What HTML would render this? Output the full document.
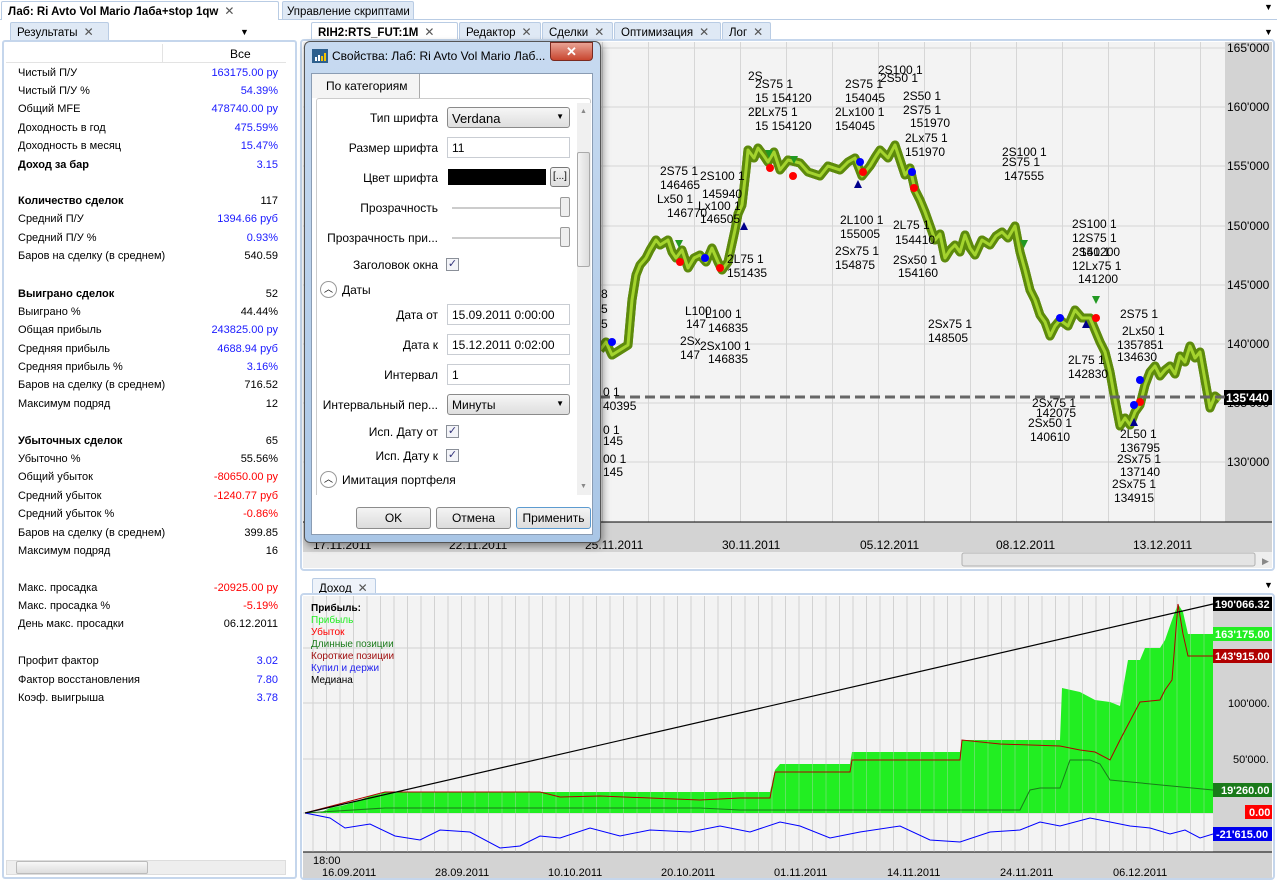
<!DOCTYPE html>
<html><head><meta charset="utf-8"><style>
*{margin:0;padding:0;box-sizing:border-box}
body{width:1277px;height:880px;overflow:hidden;background:#fff;font-family:"Liberation Sans",sans-serif;font-size:11px;color:#000;position:relative}
.a{position:absolute;white-space:nowrap}
.tab{position:absolute;height:18px;border:1px solid #b9cce4;border-bottom:none;background:#dfe9f5;padding:2px 6px;font-size:11.5px;border-radius:2px 2px 0 0;white-space:nowrap;overflow:hidden}
.tab b{font-weight:bold}
.x{color:#555;font-size:12px;margin-left:6px}
.row{position:absolute;left:18px;width:260px;height:18px}
.row .l{position:absolute;left:0;top:0}
.row .v{position:absolute;right:0;top:0;color:#1a1aff}
.bk{color:#000!important}.rd{color:#f00!important}
.lab{position:absolute;right:0;text-align:right;font-size:12px}
.inp{position:absolute;left:447px;width:123px;height:21px;border:1px solid #c9cdd3;background:#fff;font-size:12px;padding:3px 4px}
.cb{position:absolute;left:446px;width:13px;height:13px;border:1px solid #8a8f98;background:#f3f4f8;font-size:11px;line-height:11px;text-align:center;color:#33337a}
.btn{position:absolute;top:507px;height:22px;border:1px solid #8c8c8c;border-radius:3px;background:linear-gradient(#f4f4f4,#dcdcdc);font-size:12px;text-align:center;line-height:20px}
</style></head><body>

<div class="a" style="left:0;top:19px;width:1277px;height:1px;background:#b9cce4"></div>
<div class="tab" style="left:1px;top:1px;width:278px;background:#fff;height:19px"><b>Лаб: Ri Avto Vol Mario Лаба+stop 1qw</b><span class="x">✕</span></div>
<div class="tab" style="left:282px;top:1px;width:132px;padding:2px 4px">Управление скриптами<span class="x">✕</span></div>
<div class="a" style="left:1264px;top:2px;font-size:9px">▼</div>

<div class="tab" style="left:10px;top:22px;width:99px">Результаты<span class="x">✕</span></div>
<div class="a" style="left:240px;top:27px;font-size:9px">▼</div>
<div class="a" style="left:2px;top:40px;width:295px;height:839px;border:2px solid #c5d6ec;border-radius:3px;background:#fff"></div>
<div class="a" style="left:6px;top:44px;width:280px;height:19px;border-bottom:1px solid #e3e3e3"></div>
<div class="a" style="left:162px;top:44px;width:1px;height:19px;background:#e3e3e3"></div>
<div class="a" style="left:230px;top:47px;font-size:12px">Все</div>
<div id="rows"></div>
<div class="a" style="left:6px;top:860px;width:280px;height:15px;background:#eee;border:1px solid #ddd"></div>
<div class="a" style="left:16px;top:861px;width:132px;height:13px;background:linear-gradient(#f7f7f7,#ddd);border:1px solid #bbb;border-radius:2px"></div>

<div class="tab" style="left:311px;top:22px;width:147px;background:#fff"><b>RIH2:RTS_FUT:1M</b><span class="x">✕</span></div>
<div class="tab" style="left:459px;top:22px;width:82px">Редактор<span class="x">✕</span></div>
<div class="tab" style="left:542px;top:22px;width:71px">Сделки<span class="x">✕</span></div>
<div class="tab" style="left:614px;top:22px;width:107px">Оптимизация<span class="x">✕</span></div>
<div class="tab" style="left:722px;top:22px;width:49px">Лог<span class="x">✕</span></div>
<div class="a" style="left:1264px;top:27px;font-size:9px">▼</div>
<div class="tab" style="left:312px;top:578px;width:64px;background:#eef3fa">Доход<span class="x">✕</span></div>
<div class="a" style="left:1264px;top:580px;font-size:9px">▼</div>

<svg class="a" style="left:0;top:0" width="1277" height="880">
<defs>
<pattern id="vg" x="0" y="0" width="46" height="10" patternUnits="userSpaceOnUse"><rect x="0" width="1" height="10" fill="#d6d6d6"/></pattern>
<pattern id="vg2" x="2" y="0" width="13.5" height="10" patternUnits="userSpaceOnUse"><rect x="0" width="1" height="10" fill="#d2d2d2"/></pattern>
</defs>
<rect x="301" y="40" width="973" height="530" fill="#fff" stroke="#c5d6ec" stroke-width="2" rx="3"/>
<rect x="303" y="42" width="922" height="480" fill="#f3f3f3"/>
<rect x="303" y="42" width="922" height="480" fill="url(#vg)" transform="translate(4,0)"/>
<g stroke="#d6d6d6"><line x1="303" y1="48" x2="1225" y2="48"/><line x1="303" y1="107" x2="1225" y2="107"/><line x1="303" y1="166" x2="1225" y2="166"/><line x1="303" y1="226" x2="1225" y2="226"/><line x1="303" y1="285" x2="1225" y2="285"/><line x1="303" y1="344" x2="1225" y2="344"/><line x1="303" y1="403" x2="1225" y2="403"/><line x1="303" y1="462" x2="1225" y2="462"/></g>
<rect x="1225" y="42" width="47" height="480" fill="#d3d3d3"/>
<rect x="303" y="522" width="969" height="30" fill="#d3d3d3"/>
<line x1="303" y1="522" x2="1272" y2="522" stroke="#000"/>
<rect x="303" y="552" width="969" height="16" fill="#eee"/>
<rect x="962" y="553" width="293" height="13" rx="2" fill="#e4e4e4" stroke="#b0b0b0"/>
<text x="1262" y="564" font-size="9" fill="#888">▶</text>
<g font-size="12" fill="#000"><text x="1227" y="52">165'000</text><text x="1227" y="111">160'000</text><text x="1227" y="170">155'000</text><text x="1227" y="230">150'000</text><text x="1227" y="289">145'000</text><text x="1227" y="348">140'000</text><text x="1227" y="407">135'000</text><text x="1227" y="466">130'000</text></g>
<rect x="1224" y="390" width="48" height="15" fill="#000"/><text x="1226" y="402" font-size="12" fill="#fff" font-weight="bold">135'440</text>
<g font-size="12"><text x="313" y="549">17.11.2011</text><text x="449" y="549">22.11.2011</text><text x="585" y="549">25.11.2011</text><text x="722" y="549">30.11.2011</text><text x="860" y="549">05.12.2011</text><text x="996" y="549">08.12.2011</text><text x="1133" y="549">13.12.2011</text></g>
<g id="pl">
<polyline fill="none" stroke="#5d8a0c" stroke-width="9" stroke-linejoin="round" points="600,350 606,342 612,355 620,350 628,345 632,300 636,275 640,265 646,258 650,250 656,240 660,245 668,240 672,252 676,258 682,250 688,268 694,258 700,255 706,262 712,248 718,262 722,270 728,262 735,230 738,214 742,205 746,170 748,150 754,158 758,148 764,156 768,162 774,152 780,170 788,160 800,163 808,172 820,176 828,166 840,170 848,162 855,158 862,176 870,166 876,156 880,150 888,158 895,145 900,160 905,175 910,168 915,190 920,200 925,212 930,226 935,240 940,234 945,258 950,250 955,245 960,252 965,235 970,248 975,255 982,240 990,245 996,236 1002,232 1008,238 1015,226 1020,252 1025,270 1030,290 1035,300 1040,315 1045,322 1050,336 1055,326 1060,320 1068,326 1075,310 1082,318 1090,318 1095,330 1100,342 1105,352 1110,372 1115,400 1120,426 1125,418 1130,425 1135,412 1140,405 1145,385 1150,372 1155,366 1160,376 1165,370 1170,366 1175,374 1180,356 1185,362 1190,346 1195,358 1200,352 1205,380 1210,408 1215,396 1220,400"/>
</g>
<use href="#pl" style="stroke:#9ccc2a"/>
<polyline fill="none" stroke="#a4d42e" stroke-width="3" stroke-linejoin="round" points="600,350 606,342 612,355 620,350 628,345 632,300 636,275 640,265 646,258 650,250 656,240 660,245 668,240 672,252 676,258 682,250 688,268 694,258 700,255 706,262 712,248 718,262 722,270 728,262 735,230 738,214 742,205 746,170 748,150 754,158 758,148 764,156 768,162 774,152 780,170 788,160 800,163 808,172 820,176 828,166 840,170 848,162 855,158 862,176 870,166 876,156 880,150 888,158 895,145 900,160 905,175 910,168 915,190 920,200 925,212 930,226 935,240 940,234 945,258 950,250 955,245 960,252 965,235 970,248 975,255 982,240 990,245 996,236 1002,232 1008,238 1015,226 1020,252 1025,270 1030,290 1035,300 1040,315 1045,322 1050,336 1055,326 1060,320 1068,326 1075,310 1082,318 1090,318 1095,330 1100,342 1105,352 1110,372 1115,400 1120,426 1125,418 1130,425 1135,412 1140,405 1145,385 1150,372 1155,366 1160,376 1165,370 1170,366 1175,374 1180,356 1185,362 1190,346 1195,358 1200,352 1205,380 1210,408 1215,396 1220,400"/>
<line x1="600" y1="397" x2="1225" y2="397" stroke="#666" stroke-width="3" stroke-dasharray="10,5"/>
<g fill="#f00"><circle cx="680" cy="262" r="4"/><circle cx="720" cy="268" r="4"/><circle cx="770" cy="168" r="4"/><circle cx="793" cy="176" r="4"/><circle cx="863" cy="172" r="4"/><circle cx="914" cy="188" r="4"/><circle cx="1096" cy="318" r="4"/><circle cx="1140" cy="402" r="4"/></g>
<g fill="#00f"><circle cx="705" cy="258" r="4"/><circle cx="612" cy="342" r="4"/><circle cx="860" cy="162" r="4"/><circle cx="912" cy="172" r="4"/><circle cx="1060" cy="318" r="4"/><circle cx="1134" cy="405" r="4"/><circle cx="1140" cy="380" r="4"/></g>
<g fill="#229922"><polygon points="765,150 773,150 769,158"/><polygon points="790,156 798,156 794,164"/><polygon points="675,240 683,240 679,248"/><polygon points="1092,296 1100,296 1096,304"/><polygon points="1020,240 1028,240 1024,248"/></g>
<g fill="#00008b"><polygon points="740,230 748,230 744,222"/><polygon points="854,188 862,188 858,180"/><polygon points="1082,328 1090,328 1086,320"/><polygon points="1130,426 1138,426 1134,418"/></g>
<g font-size="12" fill="#000">
<text x="748" y="80">2S</text><text x="755" y="88">2S75 1</text><text x="755" y="102">15 154120</text><text x="748" y="116">2L</text><text x="755" y="116">2Lx75 1</text><text x="755" y="130">15 154120</text>
<text x="845" y="88">2S75 1</text><text x="845" y="102">154045</text><text x="835" y="116">2Lx100 1</text><text x="835" y="130">154045</text>
<text x="878" y="74">2S100 1</text><text x="880" y="82">2S50 1</text><text x="903" y="100">2S50 1</text><text x="903" y="114">2S75 1</text><text x="910" y="127">151970</text><text x="905" y="142">2Lx75 1</text><text x="905" y="156">151970</text>
<text x="1002" y="156">2S100 1</text><text x="1002" y="166">2S75 1</text><text x="1004" y="180">147555</text>
<text x="660" y="175">2S75 1</text><text x="660" y="189">146465</text><text x="700" y="180">2S100 1</text><text x="702" y="198">145940</text><text x="657" y="203">Lx50 1</text><text x="698" y="210">Lx100 1</text><text x="667" y="217">146770</text><text x="700" y="223">146505</text>
<text x="727" y="263">2L75 1</text><text x="727" y="277">151435</text>
<text x="840" y="224">2L100 1</text><text x="840" y="238">155005</text><text x="835" y="255">2Sx75 1</text><text x="835" y="269">154875</text>
<text x="893" y="229">2L75 1</text><text x="895" y="244">154410</text><text x="893" y="264">2Sx50 1</text><text x="898" y="277">154160</text>
<text x="928" y="328">2Sx75 1</text><text x="928" y="342">148505</text>
<text x="1072" y="228">2S100 1</text><text x="1072" y="242">12S75 1</text><text x="1072" y="256">2S50 1</text><text x="1072" y="270">12Lx75 1</text><text x="1078" y="283">141200</text><text x="1080" y="256">141200</text>
<text x="1120" y="318">2S75 1</text><text x="1122" y="335">2Lx50 1</text><text x="1117" y="349">1357851</text><text x="1117" y="361">134630</text>
<text x="1068" y="364">2L75 1</text><text x="1068" y="378">142830</text>
<text x="1032" y="407">2Sx75 1</text><text x="1036" y="417">142075</text><text x="1028" y="427">2Sx50 1</text><text x="1030" y="441">140610</text>
<text x="1120" y="438">2L50 1</text><text x="1120" y="452">136795</text><text x="1117" y="463">2Sx75 1</text><text x="1120" y="476">137140</text><text x="1112" y="488">2Sx75 1</text><text x="1114" y="502">134915</text>
<text x="685" y="315">L100</text><text x="705" y="318">L100 1</text><text x="686" y="328">147</text><text x="708" y="332">146835</text><text x="680" y="345">2Sx</text><text x="700" y="350">2Sx100 1</text><text x="680" y="359">147</text><text x="708" y="363">146835</text>
<text x="601" y="298">8</text><text x="601" y="313">5</text><text x="601" y="328">5</text><text x="603" y="396">0 1</text><text x="603" y="410">40395</text><text x="603" y="434">0 1</text><text x="603" y="445">145</text><text x="603" y="463">00 1</text><text x="603" y="476">145</text>
</g>

<rect x="301" y="594" width="973" height="285" fill="#fff" stroke="#c5d6ec" stroke-width="2" rx="3"/>
<rect x="303" y="596" width="910" height="256" fill="#f3f3f3"/>
<rect x="303" y="596" width="910" height="256" fill="url(#vg2)"/>
<g stroke="#d2d2d2"><line x1="303" y1="648" x2="1213" y2="648"/><line x1="303" y1="703" x2="1213" y2="703"/><line x1="303" y1="759" x2="1213" y2="759"/><line x1="303" y1="813" x2="1213" y2="813"/></g>
<rect x="1213" y="596" width="59" height="256" fill="#d3d3d3"/>
<rect x="303" y="852" width="969" height="26" fill="#d3d3d3"/>
<line x1="303" y1="852" x2="1272" y2="852" stroke="#000"/>
<polygon fill="#22ee22" points="320,813 330,808 345,805 360,800 370,796 380,794 385,792 770,792 775,770 780,764 850,764 852,752 960,752 962,740 1060,740 1062,688 1080,692 1095,700 1110,702 1120,706 1128,660 1140,660 1145,648 1160,648 1165,640 1172,620 1178,604 1183,612 1188,634 1213,634 1213,813"/>
<rect x="303" y="596" width="910" height="256" fill="url(#vg2)" opacity="0.35"/>
<polyline fill="none" stroke="#b00000" stroke-width="1" points="305,813 385,792 540,792 560,797 600,796 700,800 740,798 770,798 775,772 850,772 852,760 960,760 962,740 1000,744 1060,746 1080,750 1095,752 1110,760 1120,740 1140,702 1160,700 1165,690 1172,680 1178,604 1183,634 1188,656 1213,656"/>
<polyline fill="none" stroke="#1a7a1a" stroke-width="1" points="305,813 385,808 700,808 740,810 1020,810 1030,790 1040,788 1060,788 1070,760 1090,760 1100,764 1110,780 1213,790"/>
<polyline fill="none" stroke="#00f" stroke-width="1" points="305,813 330,818 345,828 370,824 395,836 420,840 440,830 470,832 500,848 520,846 540,836 560,838 590,828 620,836 650,830 690,832 720,826 750,832 780,822 800,826 830,838 860,832 900,826 930,840 960,842 990,832 1020,830 1040,822 1060,826 1090,818 1110,822 1130,826 1150,828 1170,834 1185,830 1200,838 1213,834"/>
<line x1="305" y1="813" x2="1213" y2="604" stroke="#000" stroke-width="1.2"/>
<g font-size="10"><text x="311" y="611" font-weight="bold">Прибыль:</text><text x="311" y="623" fill="#22ee22">Прибыль</text><text x="311" y="635" fill="#f00">Убыток</text><text x="311" y="647" fill="#1a7a1a">Длинные позиции</text><text x="311" y="659" fill="#a01010">Короткие позиции</text><text x="311" y="671" fill="#2222ee">Купил и держи</text><text x="311" y="683">Медиана</text></g>
<g font-size="11" font-weight="bold">
<rect x="1213" y="597" width="59" height="14" fill="#000"/><text x="1215" y="608" fill="#fff">190'066.32</text>
<rect x="1213" y="627" width="59" height="14" fill="#22ee22"/><text x="1215" y="638" fill="#fff">163'175.00</text>
<rect x="1213" y="649" width="59" height="14" fill="#b00000"/><text x="1215" y="660" fill="#fff">143'915.00</text>
<rect x="1213" y="783" width="59" height="14" fill="#1a7a1a"/><text x="1221" y="794" fill="#fff">19'260.00</text>
<rect x="1245" y="805" width="27" height="14" fill="#f00"/><text x="1249" y="816" fill="#fff">0.00</text>
<rect x="1213" y="827" width="59" height="14" fill="#0000ee"/><text x="1216" y="838" fill="#fff">-21'615.00</text>
</g>
<g font-size="11"><text x="1228" y="707">100'000.</text><text x="1233" y="763">50'000.</text></g>
<g font-size="11"><text x="313" y="864">18:00</text><text x="322" y="876">16.09.2011</text><text x="435" y="876">28.09.2011</text><text x="548" y="876">10.10.2011</text><text x="661" y="876">20.10.2011</text><text x="774" y="876">01.11.2011</text><text x="887" y="876">14.11.2011</text><text x="1000" y="876">24.11.2011</text><text x="1113" y="876">06.12.2011</text></g>
</svg>

<div class="a" style="left:304px;top:41px;width:297px;height:502px;border:1px solid #555;border-radius:6px;background:linear-gradient(#c7daf0,#a9c6e6);box-shadow:2px 3px 8px rgba(0,0,0,.4)"></div>
<svg class="a" style="left:312px;top:49px" width="16" height="14"><rect width="16" height="14" fill="#2d5f8d"/><rect x="3" y="8" width="2" height="4" fill="#fff"/><rect x="6" y="6" width="2" height="6" fill="#fff"/><rect x="9" y="7" width="2" height="5" fill="#f5c400"/><rect x="12" y="4" width="2" height="8" fill="#f5c400"/></svg>
<div class="a" style="left:332px;top:49px;font-size:12px">Свойства: Лаб: Ri Avto Vol Mario Лаб...</div>
<div class="a" style="left:550px;top:42px;width:43px;height:19px;border:1px solid #7a2a20;border-radius:0 0 4px 4px;background:linear-gradient(#e9a394,#c8462f);color:#fff;font-weight:bold;font-size:13px;text-align:center;line-height:17px">✕</div>
<div class="a" style="left:311px;top:73px;width:282px;height:462px;background:#fff;border:1px solid #8a9cb3"></div>
<div class="a" style="left:312px;top:74px;width:108px;height:24px;background:#f4f4f4;border-right:1px solid #aaa;font-size:12px;padding:5px 0 0 14px">По категориям</div>
<div class="a" style="left:316px;top:98px;width:275px;height:397px;border:1px solid #ccc;border-bottom:none;border-radius:3px 3px 0 0;background:#fff"></div>
<div class="a" style="left:577px;top:103px;width:14px;height:392px;background:#f0f0f0"></div>
<div class="a" style="left:577px;top:152px;width:13px;height:115px;border:1px solid #aaa;border-radius:2px;background:linear-gradient(90deg,#f4f4f4,#ddd)"></div>
<div class="a" style="left:580px;top:108px;font-size:7px;color:#888">▲</div>
<div class="a" style="left:580px;top:483px;font-size:7px;color:#888">▼</div>
<div class="a" style="left:316px;top:110px;width:122px;height:380px">
<div class="lab" style="top:1px">Тип шрифта</div>
<div class="lab" style="top:31px">Размер шрифта</div>
<div class="lab" style="top:61px">Цвет шрифта</div>
<div class="lab" style="top:91px">Прозрачность</div>
<div class="lab" style="top:121px">Прозрачность при...</div>
<div class="lab" style="top:148px">Заголовок окна</div>
<div class="lab" style="top:198px">Дата от</div>
<div class="lab" style="top:228px">Дата к</div>
<div class="lab" style="top:258px">Интервал</div>
<div class="lab" style="top:288px">Интервальный пер...</div>
<div class="lab" style="top:315px">Исп. Дату от</div>
<div class="lab" style="top:339px">Исп. Дату к</div>
</div>
<div class="inp" style="top:107px;border-color:#8a8a8a;border-radius:3px;background:linear-gradient(#f6f6f6,#dedede);font-size:13px">Verdana<span style="position:absolute;right:5px;top:4px;font-size:8px">▼</span></div>
<div class="inp" style="top:137px">11</div>
<div class="a" style="left:448px;top:169px;width:98px;height:16px;background:#000"></div>
<div class="a" style="left:550px;top:167px;width:20px;height:20px;border:1px solid #777;border-radius:3px;background:linear-gradient(#f4f4f4,#ddd);font-size:10px;text-align:center;line-height:18px">[...]</div>
<div class="a" style="left:452px;top:207px;width:118px;height:2px;background:#ccc"></div>
<div class="a" style="left:560px;top:197px;width:10px;height:20px;border:1px solid #999;border-radius:2px;background:#eee"></div>
<div class="a" style="left:452px;top:237px;width:118px;height:2px;background:#ccc"></div>
<div class="a" style="left:560px;top:227px;width:10px;height:20px;border:1px solid #999;border-radius:2px;background:#eee"></div>
<div class="cb" style="top:258px">✓</div>
<div class="a" style="left:320px;top:281px;width:17px;height:17px;border:1px solid #999;border-radius:50%;font-size:9px;text-align:center;line-height:15px">︿</div>
<div class="a" style="left:342px;top:283px;font-size:12px">Даты</div>
<div class="inp" style="top:304px">15.09.2011 0:00:00</div>
<div class="inp" style="top:334px">15.12.2011 0:02:00</div>
<div class="inp" style="top:364px">1</div>
<div class="inp" style="top:394px;border-color:#8a8a8a;border-radius:3px;background:linear-gradient(#f6f6f6,#dedede)">Минуты<span style="position:absolute;right:5px;top:4px;font-size:8px">▼</span></div>
<div class="cb" style="top:425px">✓</div>
<div class="cb" style="top:449px">✓</div>
<div class="a" style="left:320px;top:471px;width:17px;height:17px;border:1px solid #999;border-radius:50%;font-size:9px;text-align:center;line-height:15px">︿</div>
<div class="a" style="left:342px;top:473px;font-size:12px">Имитация портфеля</div>
<div class="btn" style="left:356px;width:75px">OK</div>
<div class="btn" style="left:436px;width:75px">Отмена</div>
<div class="btn" style="left:516px;width:75px;border-color:#5d9bd0">Применить</div>

<script>
var R=[[73,"Чистый П/У","163175.00 ру",""],[91,"Чистый П/У %","54.39%",""],[109,"Общий MFE","478740.00 ру",""],[128,"Доходность в год","475.59%",""],[146,"Доходность в месяц","15.47%",""],[165,"<b>Доход за бар</b>","3.15",""],
[201,"<b>Количество сделок</b>","117","bk"],[219,"Средний П/У","1394.66 руб",""],[238,"Средний П/У %","0.93%",""],[256,"Баров на сделку (в среднем)","540.59","bk"],
[294,"<b>Выиграно сделок</b>","52","bk"],[312,"Выиграно %","44.44%","bk"],[330,"Общая прибыль","243825.00 ру",""],[349,"Средняя прибыль","4688.94 руб",""],[367,"Средняя прибыль %","3.16%",""],[385,"Баров на сделку (в среднем)","716.52","bk"],[404,"Максимум подряд","12","bk"],
[441,"<b>Убыточных сделок</b>","65","bk"],[459,"Убыточно %","55.56%","bk"],[477,"Общий убыток","-80650.00 ру","rd"],[496,"Средний убыток","-1240.77 руб","rd"],[514,"Средний убыток %","-0.86%","rd"],[533,"Баров на сделку (в среднем)","399.85","bk"],[551,"Максимум подряд","16","bk"],
[588,"Макс. просадка","-20925.00 ру","rd"],[606,"Макс. просадка %","-5.19%","rd"],[624,"День макс. просадки","06.12.2011","bk"],
[661,"Профит фактор","3.02",""],[680,"Фактор восстановления","7.80",""],[698,"Коэф. выигрыша","3.78",""]];
var h="";R.forEach(function(r){h+='<div class="row" style="top:'+(r[0]-6)+'px"><span class="l">'+r[1]+'</span><span class="v '+r[3]+'">'+r[2]+'</span></div>'});
document.getElementById("rows").innerHTML=h;
</script>
</body></html>
